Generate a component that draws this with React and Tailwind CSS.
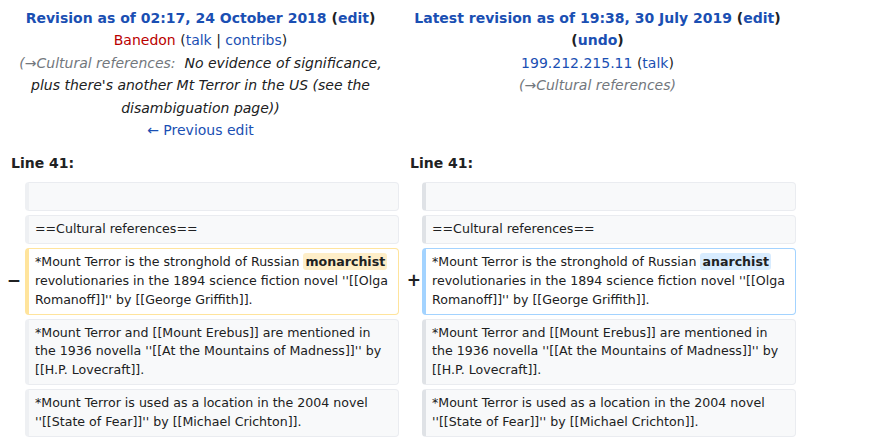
import React from "react";

const link = "text-[#1a4fb3]";

const leftRows = [
  { kind: "context", text: "" },
  { kind: "context", text: "==Cultural references==" },
  {
    kind: "deleted",
    text: (
      <>
        *Mount Terror is the stronghold of Russian{" "}
        <span className="font-bold bg-[#feeec8] rounded-[3px] px-[2px] py-[1px]">monarchist</span>{" "}
        revolutionaries in the 1894 science fiction novel ''[[Olga Romanoff]]'' by [[George Griffith]].
      </>
    ),
  },
  {
    kind: "context",
    text: "*Mount Terror and [[Mount Erebus]] are mentioned in the 1936 novella ''[[At the Mountains of Madness]]'' by [[H.P. Lovecraft]].",
  },
  {
    kind: "context",
    text: "*Mount Terror is used as a location in the 2004 novel ''[[State of Fear]]'' by [[Michael Crichton]].",
  },
];

const rightRows = [
  { kind: "context", text: "" },
  { kind: "context", text: "==Cultural references==" },
  {
    kind: "added",
    text: (
      <>
        *Mount Terror is the stronghold of Russian{" "}
        <span className="font-bold bg-[#d8ecff] rounded-[3px] px-[2px] py-[1px]">anarchist</span>{" "}
        revolutionaries in the 1894 science fiction novel ''[[Olga Romanoff]]'' by [[George Griffith]].
      </>
    ),
  },
  leftRows[3],
  leftRows[4],
];

const Box = ({ kind, side, children }) => {
  let cls = "";
  if (kind === "deleted") cls = "bg-white border-[#ffe49c]";
  else if (kind === "added") cls = "bg-white border-[#a3d3ff]";
  else
    cls =
      side === "left"
        ? "bg-[#f8f9fa] border-[#eaecf0] border-l-[#eef0f3]"
        : "bg-[#f8f9fa] border-[#eaecf0] border-l-[#dfe2e6]";
  return (
    <div
      className={`w-[374px] min-h-[29px] border border-l-4 rounded-[4px] pl-[6px] pr-[6px] py-[4px] text-[12.6px] leading-[18.9px] text-[#202122] ${cls}`}
    >
      {children}
    </div>
  );
};

const Marker = ({ kind, side }) => (
  <div
    className={`w-[23px] flex items-center justify-end text-[17px] font-bold text-[#202122] ${
      side === "left" ? "pr-[4px]" : "pr-[1px]"
    }`}
  >
    {kind === "deleted" ? "−" : kind === "added" ? "+" : ""}
  </div>
);

const App = () => {
  return (
    <div className="w-[874px] h-[442px] bg-white overflow-hidden font-['DejaVu_Sans',sans-serif] text-[#202122]">
      <div className="ml-[2px] w-[794px]">
        <div className="grid grid-cols-2 pt-[7px] text-[14px] leading-[22.4px] text-center">
          <div className="px-[12px]">
            <div className="font-bold">
              <span className={link}>Revision as of 02:17, 24 October 2018</span> (
              <span className={link}>edit</span>)
            </div>
            <div>
              <span className="text-[#ba0000]">Banedon</span> (<span className={link}>talk</span> |{" "}
              <span className={link}>contribs</span>)
            </div>
            <div className="italic text-[#202122]">
              <span className="text-[#72777d]">(→Cultural references:</span>
              {"\u00a0 "}No evidence of significance, plus there's another Mt Terror in the US (see the
              disambiguation page))
            </div>
            <div>
              <span className={link}>← Previous edit</span>
            </div>
          </div>
          <div className="px-[12px]">
            <div className="font-bold">
              <span className={link}>Latest revision as of 19:38, 30 July 2019</span> (
              <span className={link}>edit</span>) (<span className={link}>undo</span>)
            </div>
            <div>
              <span className={link}>199.212.215.11</span> (<span className={link}>talk</span>)
            </div>
            <div className="italic text-[#72777d]">(→Cultural references)</div>
          </div>
        </div>

        <div className="grid grid-cols-2 mt-[11px] text-[14px] leading-[22.4px] font-bold">
          <div className="pl-[9px]">Line 41:</div>
          <div className="pl-[11px]">Line 41:</div>
        </div>

        <div className="mt-[7px] flex flex-col gap-[4px]">
          {leftRows.map((row, i) => (
            <div key={i} className="flex">
              <Marker kind={row.kind} side="left" />
              <Box kind={row.kind} side="left">
                {row.text}
              </Box>
              <Marker kind={rightRows[i].kind} side="right" />
              <Box kind={rightRows[i].kind} side="right">
                {rightRows[i].text}
              </Box>
            </div>
          ))}
        </div>
      </div>
    </div>
  );
};

export default App;
